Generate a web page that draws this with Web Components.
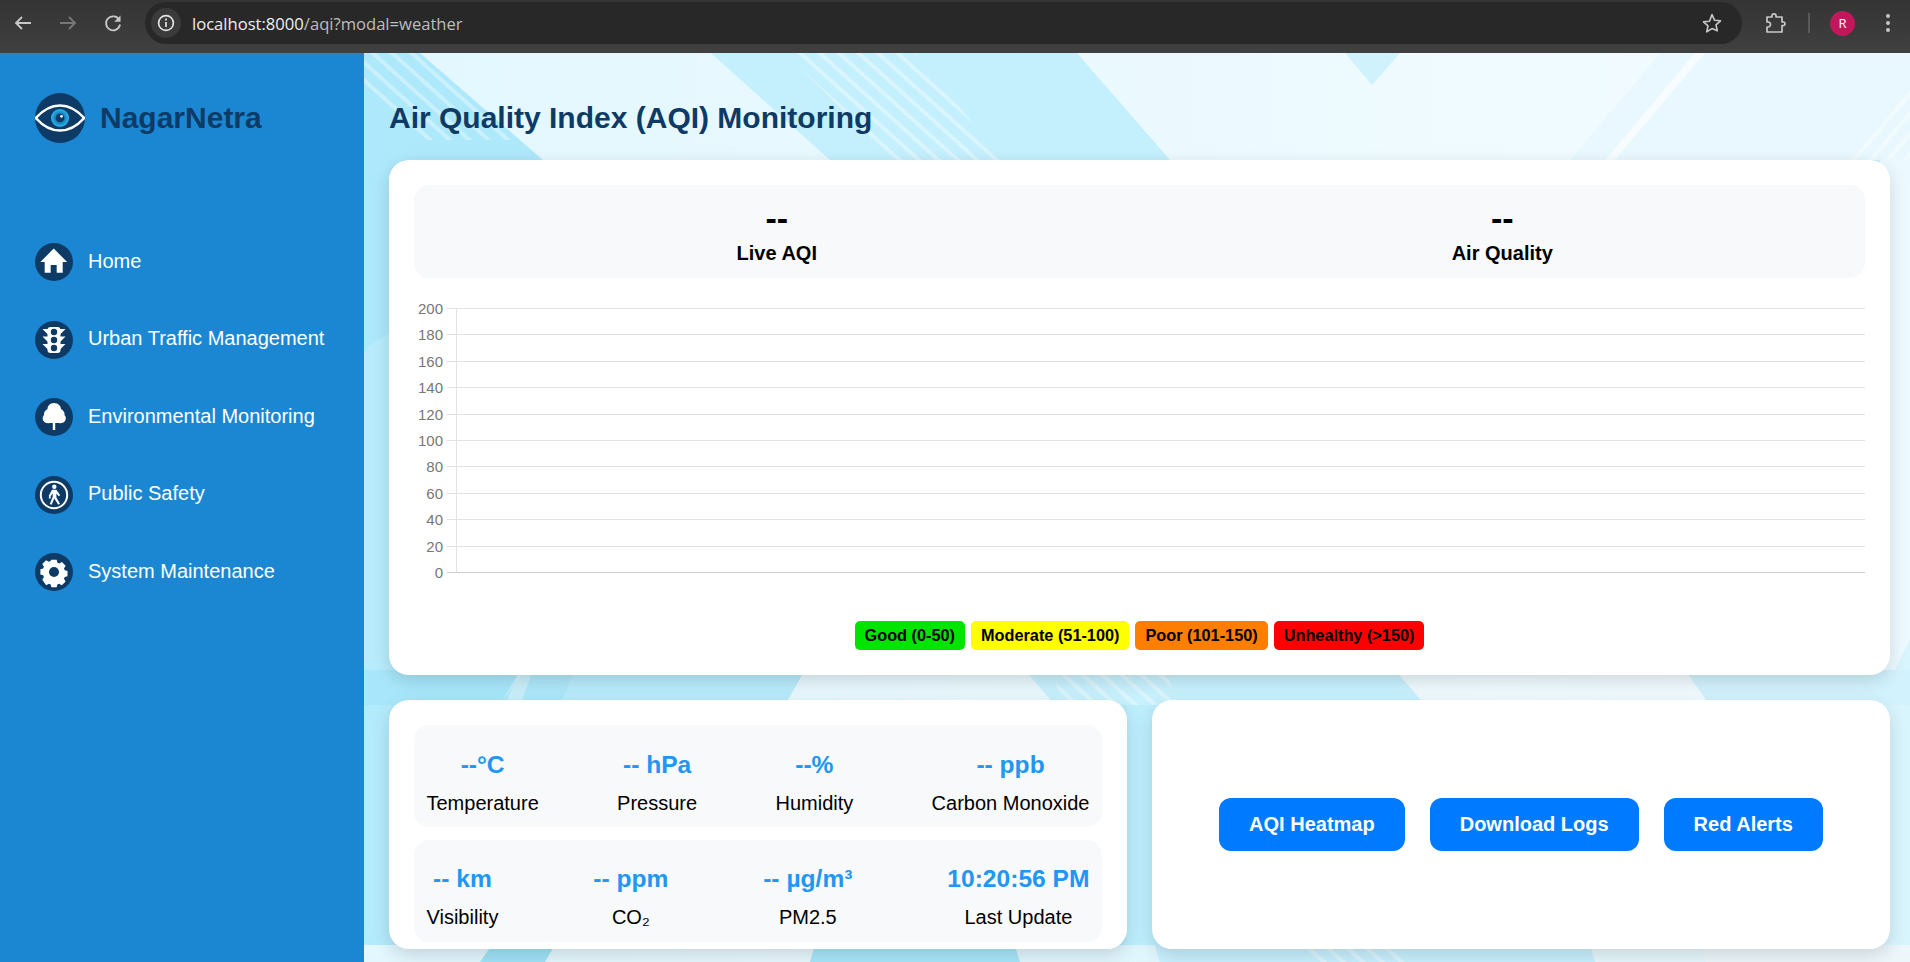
<!DOCTYPE html>
<html lang="en">
<head>
<meta charset="UTF-8" />
<title>NagarNetra AQI</title>
<style>
  html, body { height: 100%; overflow: hidden; }
  body { margin: 0; font-family: "Liberation Sans", Arial, sans-serif; display: flex; flex-direction: column; height: 962px; }
</style>
</head>
<body>
  <browser-bar url-host="localhost:8000" url-rest="/aqi?modal=weather"></browser-bar>
  <app-shell>
    <side-nav slot="side"></side-nav>
    <page-title>Air Quality Index (AQI) Monitoring</page-title>
    <aqi-panel></aqi-panel>
    <bottom-row>
      <metrics-card></metrics-card>
      <actions-card>
        <action-button>AQI Heatmap</action-button>
        <action-button>Download Logs</action-button>
        <action-button>Red Alerts</action-button>
      </actions-card>
    </bottom-row>
  </app-shell>

<script>
  // small helper, every element here is just a shadow root with fixed markup
  class Base extends HTMLElement {
    constructor() {
      super();
      this.attachShadow({ mode: 'open' }).innerHTML =
        '<style>:host, * { box-sizing: border-box; }</style>' + this.markup();
    }
    markup() { return ''; }
  }

  customElements.define('browser-bar', class extends Base {
    markup() {
      return `<style>
        :host { display: flex; align-items: center; height: 53px; flex: none; background: linear-gradient(#343434, #404040); color: #c7c7c7; }
        .nav { width: 145px; display: flex; padding-left: 12px; gap: 23px; flex: none; margin-top: -7px; }
        svg { display: block; flex: none; }
        .pill { flex: 1; height: 42px; margin-top: -7px; background: #282828; border-radius: 21px; display: flex; align-items: center; padding: 0 19px 0 6px; }
        .info { width: 30px; height: 30px; border-radius: 50%; background: #3b3b3b; display: flex; align-items: center; justify-content: center; margin-right: 11px; }
        .url { font: 16.600px "Open Sans", sans-serif; color: #bdbdbd; flex: 1; }
        .url b { font-weight: 400; color: #eceff1; }
        .right { width: 168px; flex: none; display: flex; align-items: center; margin-top: -7px; height: 42px; padding-left: 23px; }
        .sep { width: 2px; height: 20px; background: #5a5a5a; margin: 0 20px 0 21px; }
        .avatar { width: 25px; height: 25px; border-radius: 50%; background: #c2185b; color: #fff; font: 13px "Open Sans", sans-serif; display: flex; align-items: center; justify-content: center; }
        .dots { margin-left: 30px; }
      </style>
      <div class="nav">
        <svg width="22" height="22" viewBox="0 0 22 22" fill="none" stroke="#c7c7c7" stroke-width="1.8"><path d="M19 11H4M10 5l-6 6 6 6"/></svg>
        <svg width="22" height="22" viewBox="0 0 22 22" fill="none" stroke="#777" stroke-width="1.8"><path d="M3 11h15M12 5l6 6-6 6"/></svg>
        <svg width="22" height="22" viewBox="0 0 22 22" fill="none" stroke="#c7c7c7" stroke-width="1.8"><path d="M17.500 8.500A7 7 0 1 0 18 12.500"/><path d="M18.500 3.500v6.300h-6.300z" fill="#c7c7c7" stroke="none"/></svg>
      </div>
      <div class="pill">
        <div class="info"><svg width="20" height="20" viewBox="0 0 20 20" fill="none" stroke="#e3e3e3" stroke-width="1.7"><circle cx="10" cy="10" r="7.400"/><path d="M10 9v5M10 5.600v1.800"/></svg></div>
        <div class="url"><b>${this.getAttribute('url-host') || 'localhost:8000'}</b>${this.getAttribute('url-rest') || '/aqi?modal=weather'}</div>
        <svg width="22" height="22" viewBox="0 0 22 22" fill="none" stroke="#c7c7c7" stroke-width="1.600" stroke-linejoin="round"><path d="M11 2.600l2.500 5.600 6 .6-4.500 4 1.300 6L11 16.600 5.700 19.800l1.300-6-4.500-4 6-.6z"/></svg>
      </div>
      <div class="right">
        <svg width="22" height="22" viewBox="0 0 22 22" fill="none" stroke="#c7c7c7" stroke-width="1.700" stroke-linejoin="round"><path d="M2 5h5V3.800a2 2 0 0 1 4 0V5h6v5h1.200a1.800 1.800 0 0 1 0 3.600H17V20H2v-5h1a2.500 2.500 0 0 0 0-5H2z"/></svg>
        <div class="sep"></div>
        <div class="avatar">R</div>
        <svg class="dots" width="6" height="20" viewBox="0 0 6 20" fill="#c7c7c7"><circle cx="3" cy="3" r="2"/><circle cx="3" cy="10" r="2"/><circle cx="3" cy="17" r="2"/></svg>
      </div>`;
    }
  });

  customElements.define('app-shell', class extends Base {
    markup() {
      return `<style>
        :host { display: flex; flex: 1; min-height: 0; overflow: hidden; }
        .main { flex: 1; min-width: 0; position: relative; padding: 25px 20px 0 25px; background: #c4effd; overflow: hidden; }
        .bg { position: absolute; left: 0; top: 0; width: 100%; height: 100%; }
        .content { position: relative; display: flex; flex-direction: column; }
      </style>
      <slot name="side"></slot>
      <div class="main">
        <svg class="bg" viewBox="364 53 1546 909" preserveAspectRatio="none">
          <defs>
            <linearGradient id="pale" gradientUnits="userSpaceOnUse" x1="364" y1="0" x2="1910" y2="0"><stop offset="0" stop-color="#e2f7fe"/><stop offset="1" stop-color="#f4fcff"/></linearGradient>
            <pattern id="sd" width="13" height="13" patternUnits="userSpaceOnUse" patternTransform="rotate(-48)"><rect width="4" height="13" fill="#fff" fill-opacity=".35"/></pattern>
            <pattern id="su" width="13" height="13" patternUnits="userSpaceOnUse" patternTransform="rotate(40)"><rect width="4" height="13" fill="#fff" fill-opacity=".4"/></pattern>
          </defs>
          <rect x="364" y="53" width="1546" height="909" fill="#c4effd"/>
          <!-- top band -->
          <polygon points="364,53 420,53 543,160 600,400 364,400" fill="#aee8fb"/>
          <polygon points="364,53 420,53 520,140 420,140 364,90" fill="url(#sd)"/>
          <polygon points="420,53 711,53 830,160 543,160" fill="url(#pale)"/>
          <polygon points="785,53 915,53 1003,160 893,160" fill="url(#sd)"/>
          <polygon points="1077,53 1910,53 1910,160 1170,160" fill="url(#pale)"/>
          <polygon points="1345,53 1400,53 1372,85" fill="#d0f2fd"/>
          <polygon points="1660,53 1910,53 1910,160 1570,160" fill="#e8f8fe"/>
          <polygon points="1695,53 1705,53 1615,160 1605,160" fill="#fff" fill-opacity=".6"/>
          <polygon points="1850,160 1910,90 1910,160" fill="url(#su)"/>
          <!-- left and right strips -->
          <polygon points="364,160 400,160 400,700 364,700" fill="#aee8fb"/>
          <polygon points="364,350 400,325 400,700 364,700" fill="#b8ecfc"/>
          <polygon points="1880,160 1910,160 1910,640 1880,700" fill="#ecfaff"/>
          <polygon points="1880,700 1910,640 1910,962 1880,962" fill="#d8f5fe"/>
          <!-- gap under the panel -->
          <polygon points="364,670 520,670 500,705 364,705" fill="#a8e7fb"/>
          <polygon points="525,670 580,670 565,705 500,705" fill="#aee8fb"/>
          <polygon points="520,670 533,670 520,705 505,705" fill="#fff" fill-opacity=".35"/>
          <polygon points="575,670 805,670 785,705 560,705" fill="#b8ecfc"/>
          <polygon points="805,670 1025,670 1055,705 785,705" fill="url(#pale)"/>
          <polygon points="1025,670 1395,670 1425,705 1055,705" fill="#c8f1fe"/>
          <polygon points="1050,670 1165,670 1180,705 1065,705" fill="url(#sd)"/>
          <polygon points="1395,670 1685,670 1710,705 1425,705" fill="url(#pale)"/>
          <polygon points="1685,670 1910,670 1910,705 1710,705" fill="#d2f3fe"/>
          <!-- row behind the bottom cards -->
          <polygon points="364,705 1126,705 1126,945 364,945" fill="#b4ebfc"/>
          <polygon points="1126,705 1160,705 1160,945 1126,945" fill="#bdeefd"/>
          <!-- bottom band -->
          <polygon points="364,945 492,945 480,962 364,962" fill="url(#pale)"/>
          <polygon points="492,945 555,945 545,962 480,962" fill="#a0e3f8"/>
          <polygon points="555,945 815,945 810,962 545,962" fill="url(#pale)"/>
          <polygon points="815,945 1015,945 1020,962 810,962" fill="#a8e6fa"/>
          <polygon points="1015,945 1155,945 1160,962 1020,962" fill="#e0f6fd"/>
          <polygon points="1155,945 1590,945 1595,962 1160,962" fill="#c8f0fe"/>
          <polygon points="1300,945 1400,945 1410,962 1310,962" fill="url(#sd)"/>
          <polygon points="1590,945 1700,945 1705,962 1595,962" fill="#e6f8fd"/>
          <polygon points="1700,945 1910,945 1910,962 1705,962" fill="#edf7fb"/>
        </svg>
        <div class="content"><slot></slot></div>
      </div>`;
    }
  });

  const icons = {
    home: '<path d="M18.700 5.500 5.400 19h4.300v10.800h6V22h6v7.800h6V19h4.400z" fill="#fff"/>',
    traffic: '<path fill="#fff" d="M7.500 8H13v5.500zM30.500 8H25v5.500zM7.500 15.500H13V21zM30.500 15.500H25V21zM7.500 23H13v5.500zM30.500 23H25v5.500z"/><rect x="12.500" y="6" width="13" height="26" rx="3" fill="#fff"/><g fill="#0d3b66"><circle cx="19" cy="11" r="3.200"/><circle cx="19" cy="19" r="3.200"/><circle cx="19" cy="27" r="3.200"/></g>',
    tree: '<path fill="#fff" d="M19 5c-4 0-6.500 3-6.500 6-2.500 1.500-4 3.500-3.500 6-1.500 1.500-1.800 4-.5 6 1.500 2 4 2.500 6 2h3.300v7h2.400v-7H24c2 .5 4.500 0 6-2 1.300-2 1-4.500-.5-6 .5-2.500-1-4.500-3.500-6 0-3-3-6-7-6z"/>',
    walk: '<circle cx="19" cy="19" r="13.200" fill="none" stroke="#fff" stroke-width="2"/><circle cx="19.300" cy="10.800" r="2.200" fill="#fff"/><path fill="#fff" d="M17 13.800h4.400l3.800 5.400-1.500 1-2.300-2.800v4.100l3.600 6.200-1.700 1-4-6.300-2.700 6.300-1.800-.8 2.900-7.200v-3.400l-2 2.900v2.300h-1.800v-3z"/>',
    gear: '<path fill="#fff" fill-rule="evenodd" d="M16 6.500h6l.8 3.400 2 .9 3-1.800 4.100 4.300-1.800 2.900.8 2 3.100.8v5.900l-3.100.8-.8 2 1.800 3-4.200 4.200-3-1.800-2 .8-.7 3.100h-6l-.7-3.100-2-.8-3 1.800L6 28.700l1.800-3-.8-2-3.100-.8V17l3.100-.8.800-2L6 11.300l4.200-4.300 3 1.800 2-.9zM19 14.500a5.600 5.600 0 1 0 0 11.200 5.600 5.600 0 0 0 0-11.200z" transform="translate(1.900 .9) scale(.9)"/>'
  };

  customElements.define('nav-item', class extends Base {
    markup() {
      const icon = icons[this.getAttribute('icon')] || '';
      return `<style>
        :host { display: flex; align-items: center; gap: 15px; height: 38px; color: #fff; font-size: 20px; }
        svg { width: 38px; height: 38px; flex: none; display: block; }
        span { margin-bottom: 2px; }
      </style>
      <svg viewBox="0 0 38 38"><circle cx="19" cy="19" r="19" fill="#0d3b66"/>${icon}</svg>
      <span><slot></slot></span>`;
    }
  });

  customElements.define('side-nav', class extends Base {
    markup() {
      return `<style>
        :host { display: flex; flex-direction: column; width: 364px; flex: none; background: #1b87d2; padding: 40px 35px 0; }
        .brand { display: flex; align-items: center; gap: 15px; height: 50px; color: #0d3b66; font-size: 30px; font-weight: 700; }
        svg { display: block; flex: none; }
        nav { display: flex; flex-direction: column; gap: 39.600px; margin-top: 100px; }
      </style>
      <div class="brand">
        <svg width="50" height="50" viewBox="0 0 50 50">
          <defs><radialGradient id="iris"><stop offset=".35" stop-color="#0f6fb0"/><stop offset="1" stop-color="#2bb8ea"/></radialGradient></defs>
          <circle cx="25" cy="25" r="25" fill="#0d3b66"/>
          <path d="M.8 25C8 17 16 12.500 25 12.500S42 17 49.200 25C42 33 34 37.500 25 37.500S8 33 .8 25z" fill="none" stroke="#fff" stroke-width="2.500"/>
          <circle cx="25" cy="25" r="9" fill="url(#iris)"/>
          <circle cx="25" cy="25" r="4.300" fill="#0d3b66"/>
          <circle cx="26.500" cy="23.300" r="1.400" fill="#fff"/>
        </svg>
        <span>NagarNetra</span>
      </div>
      <nav>
        <nav-item icon="home">Home</nav-item>
        <nav-item icon="traffic">Urban Traffic Management</nav-item>
        <nav-item icon="tree">Environmental Monitoring</nav-item>
        <nav-item icon="walk">Public Safety</nav-item>
        <nav-item icon="gear">System Maintenance</nav-item>
      </nav>`;
    }
  });

  customElements.define('page-title', class extends Base {
    markup() {
      return `<style>
        :host { display: block; height: 82px; padding-top: 21px; color: #0d3b66; font-size: 30px; font-weight: 700; line-height: 37px; }
      </style><slot></slot>`;
    }
  });

  customElements.define('stat-box', class extends Base {
    markup() {
      return `<style>
        :host { display: flex; flex-direction: column; align-items: center; flex: 1; color: #000; font-weight: 700; }
        .v { font-size: 34px; line-height: 37px; }
        .l { font-size: 20px; line-height: 23px; margin-top: 5px; }
      </style>
      <div class="v">${this.getAttribute('value')}</div>
      <div class="l"><slot></slot></div>`;
    }
  });

  customElements.define('aqi-chart', class extends Base {
    markup() {
      // y axis 0..200, one grid line per 20
      const top = 4, step = 26.400, left = 42, tick = 33, right = 1451;
      let lines = '';
      for (let i = 0; i <= 10; i++) {
        const y = Math.round(top + i * step) + 0.5;
        const colour = i === 10 ? '#ccc' : '#e3e3e3';
        lines += `<line x1="${tick}" x2="${right}" y1="${y}" y2="${y}" stroke="${colour}"/>`;
        lines += `<text x="${tick - 4}" y="${y + 5}" text-anchor="end">${200 - i * 20}</text>`;
      }
      return `<style>
        :host { display: block; height: 300px; }
        svg { display: block; }
        text { font: 15px "Liberation Sans", sans-serif; fill: #777; }
      </style>
      <svg width="1451" height="300" viewBox="0 0 1451 300">
        <line x1="${left + .5}" x2="${left + .5}" y1="${top}" y2="${top + 264}" stroke="#e3e3e3"/>
        ${lines}
      </svg>`;
    }
  });

  customElements.define('aqi-badge', class extends Base {
    markup() {
      return `<style>
        :host { display: block; height: 29px; padding: 0 10px; border-radius: 5px; background: var(--c); color: #000; font-size: 16.300px; font-weight: 700; line-height: 29px; white-space: nowrap; }
      </style><slot></slot>`;
    }
  });

  customElements.define('aqi-panel', class extends Base {
    markup() {
      return `<style>
        :host { display: block; height: 515px; background: #fff; border-radius: 20px; padding: 25px; box-shadow: 0 6px 18px rgba(0,0,0,.14); }
        .stats { display: flex; height: 93px; padding-top: 15px; background: #f8f9fa; border-radius: 15px; }
        aqi-chart { margin-top: 26px; }
        .legend { display: flex; justify-content: center; gap: 6px; margin-top: 17px; }
      </style>
      <div class="stats">
        <stat-box value="--">Live AQI</stat-box>
        <stat-box value="--">Air Quality</stat-box>
      </div>
      <aqi-chart></aqi-chart>
      <div class="legend">
        <aqi-badge style="--c:#00e400">Good (0-50)</aqi-badge>
        <aqi-badge style="--c:#ffff00">Moderate (51-100)</aqi-badge>
        <aqi-badge style="--c:#ff7e00">Poor (101-150)</aqi-badge>
        <aqi-badge style="--c:#ff0000">Unhealthy (&gt;150)</aqi-badge>
      </div>`;
    }
  });

  customElements.define('bottom-row', class extends Base {
    markup() {
      return `<style>
        :host { display: grid; grid-template-columns: 738px 738px; grid-template-rows: 249px; gap: 25px; margin-top: 25px; }
      </style><slot></slot>`;
    }
  });

  customElements.define('metric-item', class extends Base {
    markup() {
      return `<style>
        :host { display: flex; flex-direction: column; align-items: center; }
        .v { color: #2196f3; font-size: 24.600px; font-weight: 700; line-height: 28px; white-space: nowrap; }
        .l { color: #000; font-size: 20px; line-height: 22px; margin-top: 13px; white-space: nowrap; }
      </style>
      <div class="v">${this.getAttribute('value')}</div>
      <div class="l"><slot></slot></div>`;
    }
  });

  customElements.define('metrics-card', class extends Base {
    markup() {
      return `<style>
        :host { display: flex; flex-direction: column; gap: 13px; background: #fff; border-radius: 20px; padding: 25px 25px 0; box-shadow: 0 6px 18px rgba(0,0,0,.14); }
        .row { display: flex; flex: none; justify-content: space-between; height: 102px; padding: 26px 12.500px 0; background: #f8f9fa; border-radius: 15px; }
        .row + .row { padding-top: 25px; }
      </style>
      <div class="row">
        <metric-item value="--°C">Temperature</metric-item>
        <metric-item value="-- hPa">Pressure</metric-item>
        <metric-item value="--%">Humidity</metric-item>
        <metric-item value="-- ppb">Carbon Monoxide</metric-item>
      </div>
      <div class="row">
        <metric-item value="-- km">Visibility</metric-item>
        <metric-item value="-- ppm">CO₂</metric-item>
        <metric-item value="-- µg/m³">PM2.5</metric-item>
        <metric-item value="10:20:56 PM">Last Update</metric-item>
      </div>`;
    }
  });

  customElements.define('actions-card', class extends Base {
    markup() {
      return `<style>
        :host { display: flex; align-items: center; justify-content: center; gap: 25px; background: #fff; border-radius: 20px; box-shadow: 0 6px 18px rgba(0,0,0,.14); }
      </style><slot></slot>`;
    }
  });

  customElements.define('action-button', class extends Base {
    markup() {
      return `<style>
        :host { display: block; height: 53px; padding: 0 30px; border-radius: 12px; background: #007bff; color: #fff; font-size: 20px; font-weight: 700; line-height: 53px; white-space: nowrap; }
      </style><slot></slot>`;
    }
  });
</script>
</body>
</html>
